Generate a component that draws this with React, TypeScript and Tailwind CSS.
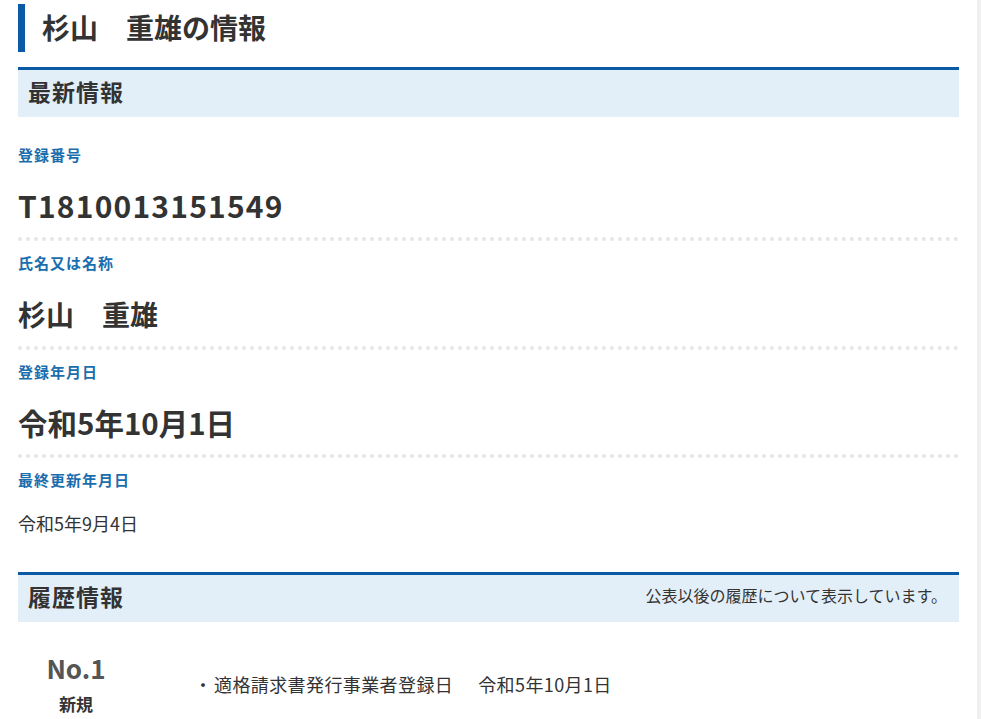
import React from 'react';

// One row of the "latest info" block
function InfoItem({
  label,
  value,
  valueClass,
  first,
  last,
}: {
  label: string;
  value: string;
  valueClass: string;
  first?: boolean;
  last?: boolean;
}) {
  return (
    <div className={last ? '' : 'border-b-4 border-dotted border-[#e6e6e6] pb-[12px]'}>
      <div
        className={`text-[15px] font-bold leading-[20px] tracking-[1px] text-[#1b6eae] ${
          first ? 'mt-[28px]' : 'mt-[12px]'
        }`}
      >
        {label}
      </div>
      <div className={`${valueClass} text-[#333]`}>{value}</div>
    </div>
  );
}

function SectionHeader({ title, note }: { title: string; note?: string }) {
  return (
    <div className="border-t-[3px] border-[#0a5aa6] bg-[#e3eff8] h-[50px] flex items-center justify-between pl-[10px] pr-[12px]">
      <h2 className="text-[23px] font-bold leading-[28px] tracking-[1px] text-[#333] -mt-[5px]">{title}</h2>
      {note && <p className="text-[16px] leading-[22px] text-[#333] -mt-[7px]">{note}</p>}
    </div>
  );
}

export default function App() {
  return (
    <div className="flex min-h-[719px] bg-white font-['Noto_Sans_CJK_JP','Noto_Sans',sans-serif] text-[#333]">
      <div className="w-[977px] px-[18px] pt-[4px]">
        {/* Page title */}
        <div className="border-l-[7px] border-[#0a5aa6] h-[48px] flex items-center pl-[17px]">
          <h1 className="text-[28px] font-bold leading-[36px] text-[#333] -mt-[3px]">杉山　重雄の情報</h1>
        </div>

        {/* Latest info */}
        <div className="mt-[15px]">
          <SectionHeader title="最新情報" />
          <InfoItem
            label="登録番号"
            value="T1810013151549"
            valueClass="text-[30px] font-bold leading-[40px] mt-[20px] tracking-[1.2px]"
            first
          />
          <InfoItem
            label="氏名又は名称"
            value="杉山　重雄"
            valueClass="text-[28px] font-bold leading-[40px] mt-[21px]"
          />
          <InfoItem
            label="登録年月日"
            value="令和5年10月1日"
            valueClass="text-[29.5px] font-bold leading-[40px] mt-[20px]"
          />
          <InfoItem
            label="最終更新年月日"
            value="令和5年9月4日"
            valueClass="text-[18px] font-normal leading-[24px] mt-[21px]"
            last
          />
        </div>

        {/* History */}
        <div className="mt-[37px]">
          <SectionHeader title="履歴情報" note="公表以後の履歴について表示しています。" />
          <div className="flex items-center">
            <div className="w-[116px] flex flex-col items-center pt-[30px]">
              <div className="text-[26px] font-bold leading-[32px] text-[#555]">No.1</div>
              <div className="text-[17px] font-bold leading-[24px] mt-[8px]">新規</div>
            </div>
            <div className="flex items-center pl-[60px] pt-[30px] text-[18px] leading-[24px]">
              <span className="w-[20px]">・</span>
              <span className="tracking-[0.4px]">適格請求書発行事業者登録日</span>
              <span className="ml-[25px] tracking-[0.4px]">令和5年10月1日</span>
            </div>
          </div>
        </div>
      </div>
      <div className="w-[4px] bg-[#f0f0f0]" />
    </div>
  );
}
